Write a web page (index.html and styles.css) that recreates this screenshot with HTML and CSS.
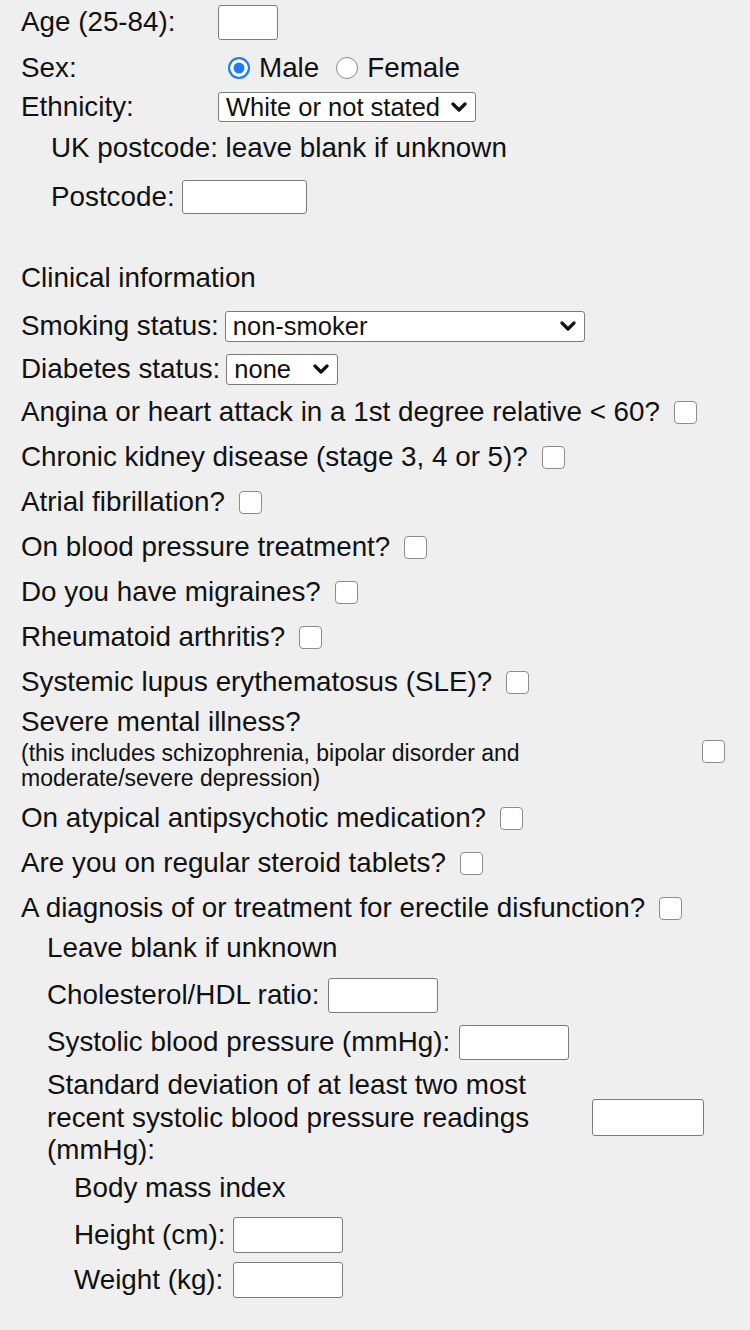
FILE: index.html
```html
<!DOCTYPE html>
<html lang="en">
<head>
  <meta charset="UTF-8">
  <title>Risk calculator</title>
  <link rel="stylesheet" href="styles.css">
</head>
<body>
  <form class="calc">
    <!-- patient details -->
    <div class="row row-age">
      <label class="lbl-col" for="age">Age (25-84):</label>
      <input class="txt txt-age" id="age" type="text">
    </div>
    <div class="row row-sex">
      <span class="lbl-col">Sex:</span>
      <label class="opt opt-first"><input class="rad" type="radio" name="sex" checked>Male</label>
      <label class="opt"><input class="rad" type="radio" name="sex">Female</label>
    </div>
    <div class="row row-eth">
      <label class="lbl-col" for="eth">Ethnicity:</label>
      <span class="sel">
        <select class="sel-box sel-eth" id="eth">
          <option>White or not stated</option>
        </select>
        <svg class="chev" width="16" height="10" viewBox="0 0 16 10"><path d="M2 2l6 6 6-6" fill="none" stroke="#111" stroke-width="3.2" stroke-linecap="round" stroke-linejoin="round"/></svg>
      </span>
    </div>
    <div class="row row-uk indent-1">UK postcode: leave blank if unknown</div>
    <div class="row row-post indent-1">
      <label for="post">Postcode:</label>
      <input class="txt txt-post" id="post" type="text">
    </div>

    <!-- clinical -->
    <div class="row row-clin">Clinical information</div>
    <div class="row row-smoke">
      <label for="smoke">Smoking status:</label>
      <span class="sel">
        <select class="sel-box sel-smoke" id="smoke">
          <option>non-smoker</option>
        </select>
        <svg class="chev" width="16" height="10" viewBox="0 0 16 10"><path d="M2 2l6 6 6-6" fill="none" stroke="#111" stroke-width="3.2" stroke-linecap="round" stroke-linejoin="round"/></svg>
      </span>
    </div>
    <div class="row row-diab">
      <label for="diab">Diabetes status:</label>
      <span class="sel">
        <select class="sel-box sel-diab" id="diab">
          <option>none</option>
        </select>
        <svg class="chev" width="16" height="10" viewBox="0 0 16 10"><path d="M2 2l6 6 6-6" fill="none" stroke="#111" stroke-width="3.2" stroke-linecap="round" stroke-linejoin="round"/></svg>
      </span>
    </div>
    <div class="row row-first-q"><label>Angina or heart attack in a 1st degree relative &lt; 60?</label><input class="cb" type="checkbox"></div>
    <div class="row row-q"><label>Chronic kidney disease (stage 3, 4 or 5)?</label><input class="cb" type="checkbox"></div>
    <div class="row row-q"><label>Atrial fibrillation?</label><input class="cb" type="checkbox"></div>
    <div class="row row-q"><label>On blood pressure treatment?</label><input class="cb" type="checkbox"></div>
    <div class="row row-q"><label>Do you have migraines?</label><input class="cb" type="checkbox"></div>
    <div class="row row-q"><label>Rheumatoid arthritis?</label><input class="cb" type="checkbox"></div>
    <div class="row row-q"><label>Systemic lupus erythematosus (SLE)?</label><input class="cb" type="checkbox"></div>
    <div class="block block-mental">
      <div class="mental-text">
        <div class="mental-title">Severe mental illness?</div>
        <div class="note">(this includes schizophrenia, bipolar disorder and<br>moderate/severe depression)</div>
      </div>
      <input class="cb cb-mental" type="checkbox">
    </div>
    <div class="row row-after-block"><label>On atypical antipsychotic medication?</label><input class="cb" type="checkbox"></div>
    <div class="row row-q"><label>Are you on regular steroid tablets?</label><input class="cb" type="checkbox"></div>
    <div class="row row-q"><label>A diagnosis of or treatment for erectile disfunction?</label><input class="cb" type="checkbox"></div>

    <!-- optional measurements -->
    <div class="row row-blank indent-2">Leave blank if unknown</div>
    <div class="row row-meas indent-2">
      <label for="chol">Cholesterol/HDL ratio:</label>
      <input class="txt txt-num" id="chol" type="text">
    </div>
    <div class="row row-meas indent-2">
      <label for="sbp">Systolic blood pressure (mmHg):</label>
      <input class="txt txt-num" id="sbp" type="text">
    </div>
    <div class="block block-sd indent-2">
      <label class="sd-text" for="sd">Standard deviation of at least two most recent systolic blood pressure readings (mmHg):</label>
      <input class="txt txt-sd" id="sd" type="text">
    </div>
    <div class="row row-bmi indent-3">Body mass index</div>
    <div class="row row-meas indent-3">
      <label class="bmi-lbl" for="ht">Height (cm):</label>
      <input class="txt txt-bmi" id="ht" type="text">
    </div>
    <div class="row row-weight indent-3">
      <label class="bmi-lbl" for="wt">Weight (kg):</label>
      <input class="txt txt-bmi" id="wt" type="text">
    </div>
  </form>
</body>
</html>
```

FILE: styles.css
```css
/*reset*/
html, body {
    margin: 0;
    padding: 0;
    background: #efefef;
}

body {
    font-family: "Liberation Sans", Arial, Helvetica, sans-serif;
    font-size: 27.8px;
    color: #111;
}

input, select {
    font-family: inherit;
    outline: 0;
    margin: 0;
}

/*layout*/
.calc {
    padding: 0 0 40px 21px;
}

.row {
    display: flex;
    align-items: center;
    height: 34px;
    line-height: 32px;
    white-space: nowrap;
    gap: 9px;
}

.row-age { margin-top: 5px; gap: 0; }
.row-sex { margin-top: 12px; gap: 0; }
.row-eth { margin-top: 5px; gap: 0; }
.row-uk { margin-top: 7px; }
.row-post { margin-top: 15px; gap: 7px; }
.row-clin { margin-top: 47px; }
.row-smoke { margin-top: 14px; gap: 6px; }
.row-diab { margin-top: 9px; gap: 6px; }
.row-first-q { margin-top: 9px; gap: 14px; }
.row-q { margin-top: 11px; gap: 14px; }
.row-after-block { margin-top: 10px; gap: 14px; }
.row-blank { margin-top: 6px; }
.row-meas { margin-top: 13px; }
.row-bmi { margin-top: 4px; }
.row-weight { margin-top: 11px; }

.indent-1 { margin-left: 30px; }
.indent-2 { margin-left: 26px; }
.indent-3 { margin-left: 53px; }

.lbl-col {
    width: 197px;
    flex: none;
}

/*radio*/
.opt {
    display: flex;
    align-items: center;
}

.opt-first {
    margin-left: 10px;
    margin-right: 17px;
}

.rad {
    -webkit-appearance: none;
    appearance: none;
    width: 22px;
    height: 22px;
    box-sizing: border-box;
    border: 1.5px solid #8a8a8a;
    border-radius: 50%;
    background: #fff;
    margin-right: 9px;
}

.rad:checked {
    border: 2px solid #1f7bf6;
    background: #1f7bf6;
    box-shadow: inset 0 0 0 3.5px #fff;
}

/*text inputs*/
.txt {
    box-sizing: border-box;
    height: 35px;
    border: 1.5px solid #7c7c7c;
    border-radius: 3px;
    background: #fff;
    padding: 0 6px;
    font-size: 24px;
}

.txt-age { width: 60px; }
.txt-post { width: 125px; height: 34px; }
.txt-num { width: 110px; }
.txt-sd { width: 112px; height: 37px; }
.txt-bmi { width: 110px; height: 36px; }

/*selects*/
.sel {
    position: relative;
    display: inline-block;
    line-height: 0;
}

.sel-box {
    -webkit-appearance: none;
    appearance: none;
    box-sizing: border-box;
    height: 30px;
    border: 1.5px solid #7c7c7c;
    border-radius: 3px;
    background: #fff;
    color: #111;
    font-size: 25.5px;
    line-height: 26px;
    padding: 0 30px 0 7px;
}

.sel-eth { width: 258px; }
.sel-smoke { width: 360px; height: 31px; }
.sel-diab { width: 112px; height: 31px; }

.chev {
    position: absolute;
    right: 9px;
    top: 50%;
    margin-top: -5px;
    pointer-events: none;
}

/*checkbox*/
.cb {
    -webkit-appearance: none;
    appearance: none;
    flex: none;
    width: 23px;
    height: 23px;
    box-sizing: border-box;
    border: 1.5px solid #8c8c8c;
    border-radius: 4px;
    background: #fff;
}

/*blocks*/
.block {
    display: flex;
    align-items: center;
}

.block-mental {
    margin-top: 7px;
}

.mental-text {
    width: 670px;
    margin-right: 11px;
    flex: none;
}

.mental-title {
    line-height: 32px;
}

.note {
    margin-top: 3px;
    font-size: 23px;
    line-height: 25px;
}

.cb-mental {
    margin-top: 5px;
}

.block-sd {
    margin-top: 10px;
}

.sd-text {
    width: 540px;
    margin-right: 5px;
    flex: none;
    line-height: 32.5px;
}

.bmi-lbl {
    width: 150px;
    flex: none;
}
```
